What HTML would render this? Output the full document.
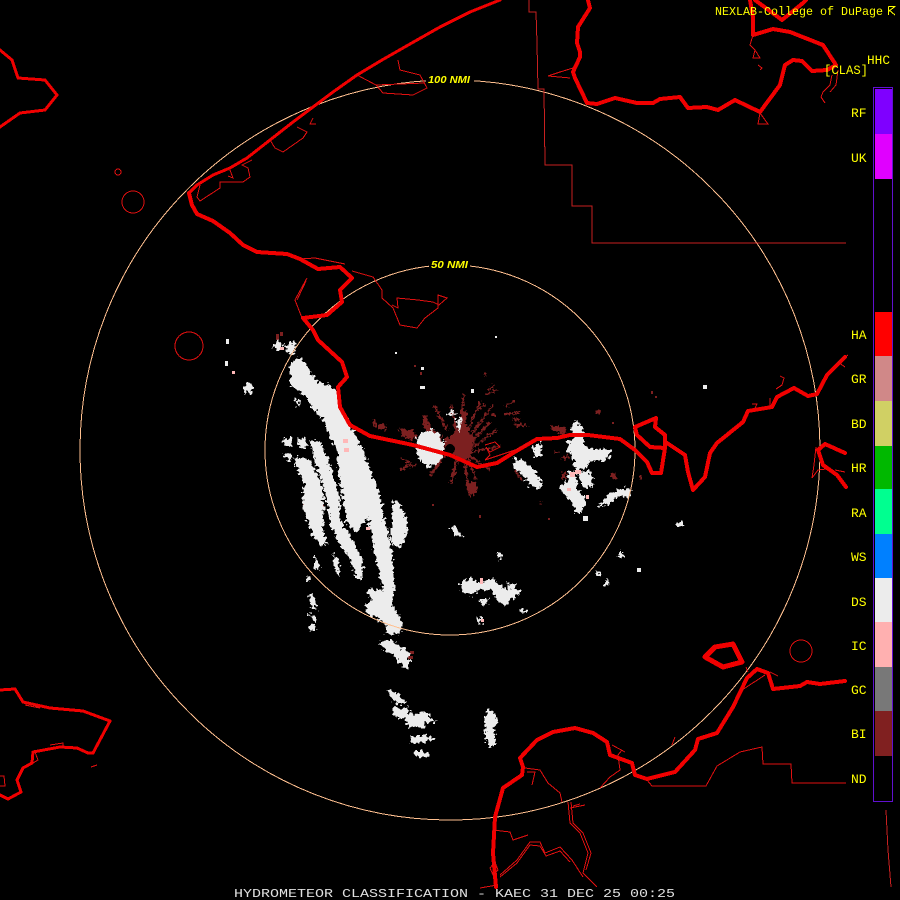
<!DOCTYPE html>
<html><head><meta charset="utf-8"><title>Hydrometeor Classification - KAEC</title>
<style>html,body{margin:0;padding:0;background:#000;width:900px;height:900px;overflow:hidden}svg{display:block}text{font-family:"Liberation Mono",monospace;fill:#ff0}</style></head>
<body>
<svg width="900" height="900" viewBox="0 0 900 900" xmlns="http://www.w3.org/2000/svg" shape-rendering="crispEdges">
<defs>
<filter id="j" filterUnits="userSpaceOnUse" x="0" y="0" width="900" height="900" color-interpolation-filters="sRGB">
<feTurbulence type="fractalNoise" baseFrequency="0.3" numOctaves="2" seed="7" result="n"/>
<feDisplacementMap in="SourceGraphic" in2="n" scale="9" xChannelSelector="R" yChannelSelector="G" result="d"/>
<feComponentTransfer in="d"><feFuncA type="discrete" tableValues="0 1"/></feComponentTransfer>
</filter>
<filter id="k" filterUnits="userSpaceOnUse" x="0" y="0" width="900" height="900" color-interpolation-filters="sRGB">
<feTurbulence type="fractalNoise" baseFrequency="0.45" numOctaves="1" seed="3" result="n"/>
<feDisplacementMap in="SourceGraphic" in2="n" scale="7" xChannelSelector="R" yChannelSelector="G" result="d"/>
<feComponentTransfer in="d"><feFuncA type="discrete" tableValues="0 1"/></feComponentTransfer>
</filter>
</defs>
<rect width="900" height="900" fill="#000"/>
<!-- clutter -->
<g filter="url(#k)">
<g fill="#7c2020">
<polygon points="453,434 460,425 463,412 467,410 466,425 470,434 476,437 473,446 470,460 460,458 451,453 446,452 444,440"/>
<polygon points="422,414 427,417 431,430 440,433 442,447 432,440 424,428"/>
<polygon points="399,428 412,430 418,436 411,440 402,436"/>
<polygon points="465,482 476,482 478,489 474,495 470,493"/>
<polygon points="551,425 565,428 567,437 560,433 551,430"/>
<polygon points="562,473 566,473 565,479 561,478"/>
<rect x="611" y="473" width="5" height="6"/>
<rect x="596" y="410" width="4" height="4"/>
<rect x="562" y="456" width="7" height="3"/>
<rect x="555" y="451" width="5" height="2"/>
<rect x="513" y="418" width="7" height="3"/>
<rect x="516" y="425" width="4" height="2"/>
<rect x="527" y="473" width="4" height="3"/>
<rect x="379" y="424" width="7" height="6"/>
<rect x="373" y="419" width="3" height="8"/>
<rect x="492" y="414" width="4" height="2"/>
<rect x="484" y="372" width="2" height="4"/>
<rect x="639" y="476" width="3" height="3"/>
<rect x="539" y="502" width="3" height="3"/>
</g>
<g stroke="#7c2020" stroke-width="2" fill="none">
<path d="M460,428L464,395M456,430L451,404M468,430L480,402M470,436L494,404M473,440L490,422M474,446L497,430M472,452L500,446M470,456L490,470M464,458L470,498M458,455L452,478M448,450L435,470M444,446L429,452M442,438L424,424M448,432L434,405M440,460L430,476M468,458L476,480M478,410L485,404M488,391L494,385M486,395L498,389M505,414L519,413M505,406L515,401M513,424L528,426M515,470L522,480M456,472L450,484M401,458L409,462M410,467L416,465M400,470L412,463"/>
</g>
</g>
<g fill="#7c2020">
<rect x="420" y="372" width="2" height="3"/>
<rect x="414" y="365" width="2" height="2"/>
<rect x="612" y="422" width="2" height="2"/>
<rect x="432" y="504" width="2" height="2"/>
<rect x="479" y="515" width="2" height="3"/>
<rect x="651" y="391" width="2" height="3"/>
<rect x="655" y="396" width="2" height="2"/>
<rect x="548" y="518" width="2" height="2"/>
<rect x="410" y="651" width="4" height="3"/>
<rect x="408" y="656" width="5" height="3"/>
<rect x="345" y="445" width="5" height="5"/>
<rect x="320" y="505" width="4" height="4"/>
<rect x="303" y="504" width="3" height="5"/>
<rect x="276" y="334" width="3" height="6"/>
<rect x="280" y="332" width="3" height="4"/>
</g>
<!-- echoes DS -->
<g fill="#ececec" filter="url(#j)">
<polygon points="290,365 297,357 305,362 312,375 318,382 330,385 338,392 341,408 350,425 357,437 363,450 370,470 377,485 381,500 383,515 368,517 358,532 347,525 343,500 338,470 337,450 330,437 323,420 310,405 305,395 290,385"/>
<polygon points="310,440 320,440 328,460 335,480 340,500 340,520 350,535 363,560 362,580 356,578 350,558 340,545 330,525 327,500 322,480 314,460"/>
<polygon points="293,458 307,458 320,478 324,500 323,530 327,545 320,545 310,530 302,505 304,485 298,470"/>
<polygon points="368,517 383,515 390,540 393,565 395,585 392,605 403,622 400,635 385,633 387,625 367,612 365,605 372,600 367,592 370,588 378,590 383,590 380,577 373,545"/>
<polygon points="272,345 279,341 284,347 279,352"/>
<polygon points="283,347 290,341 297,345 292,355"/>
<polygon points="392,500 400,505 407,520 407,535 400,548 395,546 390,540 392,520"/>
<polygon points="283,438 292,438 291,447 285,446"/>
<polygon points="283,455 292,453 291,461 287,460"/>
<polygon points="298,438 306,438 306,449 300,448"/>
<polygon points="315,555 320,565 318,572 314,566"/>
<polygon points="333,553 339,562 340,578 335,570"/>
<polygon points="306,576 311,577 310,581 306,580"/>
<polygon points="308,594 313,594 317,610 312,608"/>
<polygon points="309,613 315,617 318,620 314,622"/>
<polygon points="309,626 314,624 316,630 311,632"/>
<polygon points="380,642 392,640 405,650 410,652 408,668 402,666 393,655 384,650"/>
<polygon points="386,689 397,693 404,700 406,703 397,704 392,697"/>
<polygon points="392,708 408,707 410,714 425,712 436,722 425,722 425,727 408,727 405,718 396,718"/>
<polygon points="410,737 424,735 434,738 433,741 420,743 411,743"/>
<polygon points="413,751 428,752 429,757 415,757"/>
<polygon points="488,710 492,710 498,722 494,727 496,743 491,747 487,745 485,727 484,722"/>
<polygon points="460,583 470,578 480,583 492,578 500,585 509,591 507,582 515,585 520,593 510,600 507,605 500,603 490,590 478,590 472,596 462,592"/>
<polygon points="480,599 488,598 487,604 483,607"/>
<polygon points="450,527 455,527 464,536 462,538 454,534"/>
<polygon points="497,553 500,552 503,556 499,560"/>
<polygon points="519,609 524,608 527,612 523,614"/>
<polygon points="478,618 482,618 482,623 478,623"/>
<polygon points="417,437 425,431 433,430 441,436 445,446 443,456 436,465 427,467 421,462 416,452"/>
<polygon points="513,458 525,462 535,470 540,480 543,483 538,490 530,485 522,475 515,470"/>
<polygon points="532,446 542,443 541,455 535,458"/>
<polygon points="572,425 578,420 585,435 583,445 590,448 610,450 610,458 600,462 590,460 587,468 575,470 573,460 568,450 567,443 572,440"/>
<polygon points="560,487 567,481 568,471 575,473 578,490 585,497 585,505 580,515 575,510 570,500 560,490"/>
<polygon points="578,473 590,470 593,487 583,487"/>
<polygon points="597,505 603,502 610,492 625,488 632,490 630,496 618,497 608,505 600,507"/>
<polygon points="447,413 454,410 456,414 449,416"/>
<polygon points="456,420 462,417 461,430 458,433"/>
<rect x="245" y="383" width="7" height="10"/>
<rect x="677" y="522" width="6" height="5"/><rect x="618" y="551" width="5" height="7"/>
<rect x="596" y="572" width="6" height="4"/><rect x="604" y="580" width="5" height="5"/>
<rect x="296" y="399" width="3" height="8"/>
</g>
<g fill="#ececec">
<rect x="421" y="367" width="3" height="3"/><rect x="420" y="386" width="5" height="3"/>
<rect x="471" y="389" width="3" height="4"/><rect x="226" y="339" width="3" height="5"/>
<rect x="225" y="361" width="3" height="5"/>
<rect x="637" y="568" width="4" height="4"/><rect x="703" y="385" width="4" height="4"/>
<rect x="495" y="336" width="2" height="2"/><rect x="395" y="352" width="2" height="2"/>
<rect x="583" y="516" width="5" height="5"/>
</g>
<circle cx="450" cy="449" r="5" fill="#000"/>
<!-- IC pink -->
<g fill="#ffb8b8">
<rect x="343" y="439" width="5" height="4"/><rect x="232" y="371" width="3" height="3"/>
<rect x="344" y="448" width="5" height="4"/><rect x="366" y="527" width="4" height="3"/>
<rect x="570" y="472" width="5" height="5"/><rect x="567" y="488" width="4" height="3"/>
<rect x="575" y="470" width="6" height="4"/><rect x="586" y="495" width="3" height="4"/>
<rect x="480" y="578" width="3" height="6"/><rect x="481" y="619" width="3" height="3"/>
<rect x="280" y="347" width="4" height="3"/>
</g>
<!-- range rings -->
<g fill="none" stroke="#ffc090" stroke-width="1">
<circle cx="450" cy="450" r="370"/>
<circle cx="450" cy="450" r="185"/>
</g>
<rect x="426" y="74" width="48" height="12" fill="#000"/>
<rect x="429" y="259" width="41" height="12" fill="#000"/>
<text x="428" y="83" font-size="10.5" font-weight="bold" font-style="italic" textLength="42" lengthAdjust="spacingAndGlyphs" style="font-family:'Liberation Sans',sans-serif">100 NMI</text>
<text x="431" y="268" font-size="10.5" font-weight="bold" font-style="italic" textLength="37" lengthAdjust="spacingAndGlyphs" style="font-family:'Liberation Sans',sans-serif">50 NMI</text>
<!-- thick coasts -->
<g fill="none" stroke="#f00000" stroke-width="4" stroke-linejoin="round" stroke-linecap="round">
<path stroke-width="3" d="M500,0L470,12L440,27L410,44L382,60L357,75L333,92L313,107L293,122L270,140L247,158L230,168L213,175L197,185L189,193"/>
<path d="M189,193L192,205L197,214L213,221L230,233L243,245L257,252L287,254L300,259L318,269L340,267L352,278L340,290L342,302L327,315L303,318L313,330L318,340L342,362L347,377L338,387L340,407L350,425L370,436L413,445L450,455L477,467L497,463L513,453L537,439L557,438L570,435L588,435L620,439L635,450L647,462L652,473L661,473L665,448L665,435L655,427L656,418L635,427L637,435L650,447L665,448M667,443L685,455L688,472L693,490L705,477L710,453L717,443L743,422L748,411L772,407L777,397L794,388L808,396L817,394L827,375L845,357"/>
<path d="M845,453L825,444L818,450L823,465L837,475L846,487"/>
<path d="M588,0L590,8L578,27L577,43L580,52L580,57L573,72L575,78L587,103L597,104L615,98L637,103L653,103L660,99L680,97L688,108L707,107L718,110L735,100L760,112L780,85L785,65L793,60L802,61L812,71L827,70L836,65L823,45L790,32L773,29L753,35L753,17L750,0M755,0L782,20L803,3L806,0"/>
<path d="M0,50L12,60L18,78L45,80L57,95L45,110L20,113L0,127" stroke-width="3"/>
<path stroke-width="3" d="M0,690L15,689L23,702L50,708L83,711L110,721L93,753L88,753L77,748L60,747L33,752L32,763L23,768L17,780L21,792L8,799L0,795"/>
<path d="M496,887L493,853L495,817L503,788L522,775L523,767L520,758L537,740L553,732L575,728L593,733L607,742L610,755L632,763L635,775L647,779L675,772L695,750L698,739L717,733L733,707L747,678L757,669L768,673L773,689L800,686L807,682L820,684L845,681"/>
<path d="M705,657L715,647L733,644L742,662L723,667Z" stroke-width="5"/>
</g>
<!-- thin lines -->
<g fill="none" stroke="#e01010" stroke-width="1">
<path d="M529,0V12H536L537,43L538,89H544L545,165H572V206H592V243H846" stroke="#c82020"/>
<path d="M647,780L652,786H706L717,766L740,752L762,747L763,764H791L792,783H846"/>
<path d="M886,810L888,850L891,887" stroke="#c82020"/>
<circle cx="133" cy="202" r="11"/><circle cx="189" cy="346" r="14"/><circle cx="801" cy="651" r="11"/><circle cx="118" cy="172" r="3"/>
<path d="M376,85L383,93L413,95L427,88L420,75L400,70L398,60M357,75L376,85L425,83"/>
<path d="M270,140L275,148L283,152L303,138L307,132L297,127M313,118L310,124L316,124"/>
<path d="M200,185L197,197L200,201L220,188L220,182L243,182L250,177L248,168L242,165L252,160M230,170L233,178L228,176"/>
<path d="M352,271L373,277L382,290L382,298L393,308L400,325L417,328L425,318L438,308L438,295L447,298L439,305L433,302L418,300L397,298L398,308L392,305"/>
<path d="M300,259L315,258L335,262L345,264"/>
<path d="M307,278L295,300L302,318M306,281L297,300"/>
<path d="M525,768L540,770L548,783L560,793L562,802M527,772L535,772L532,785"/>
<path d="M568,802L570,823L580,833L588,853L583,873L597,887M571,802L573,823L583,833L591,853L586,870M570,808L585,805M573,806L580,804"/>
<path d="M493,830L510,832L513,840L528,835"/>
<path d="M500,875L517,860L530,842L540,842L545,853L560,847L572,860L583,877M500,877L517,863L530,845L540,846L546,856L560,851L570,862"/>
<path d="M600,788L610,777L620,770L618,755L622,750M612,745L625,752"/>
<path d="M490,868L495,862L498,870L493,875ZM480,888L497,885"/>
<path d="M548,76L560,72L573,68M548,76L570,78"/>
<path d="M753,35L750,45L755,50L753,58H760L755,50M758,65L762,68L760,70"/>
<path d="M832,75L830,85L823,92L821,97L825,103M838,70L836,85L830,92"/>
<path d="M760,113L758,124H768L760,113"/>
<path d="M848,355L838,362L845,367"/>
<path d="M816,447L814,465L812,478L818,470L826,469M835,470L845,472"/>
<path d="M776,389L782,385L784,378L780,376M770,407L770,398M755,408L757,404L752,404"/>
<path d="M485,460L490,455L486,447M486,447L490,452L500,447L495,442L485,445M485,460L500,455L515,450L530,443"/>
<path d="M675,737L672,745"/>
<path d="M746,667L748,672M742,690L765,675M770,672L778,676"/>
<path d="M25,705L40,708L28,702M50,745L63,743V748M35,752L38,760L33,763M0,776H4L5,786H0M91,767L97,765"/>
</g>
<!-- title -->
<text x="234" y="897" font-size="12" textLength="441" lengthAdjust="spacingAndGlyphs" style="fill:#e0e0e0">HYDROMETEOR CLASSIFICATION - KAEC 31 DEC 25 00:25</text>
<text x="715" y="15" font-size="12" textLength="168" lengthAdjust="spacingAndGlyphs">NEXLAB-College of DuPage</text>
<path d="M888.5,6.5H895.5M888.5,6.5V15M889,11L895,6.5M889,10L895,15" fill="none" stroke="#ff0"/>
<text x="867" y="64" font-size="13" textLength="23" lengthAdjust="spacingAndGlyphs">HHC</text>
<text x="824" y="74" font-size="13" textLength="44" lengthAdjust="spacingAndGlyphs">[CLAS]</text>
<!-- legend -->
<rect x="873.5" y="87.5" width="19" height="714" fill="#000" stroke="#6010d0"/>
<rect x="875" y="89" width="17" height="45" fill="#7f00ff"/>
<rect x="875" y="134" width="17" height="45" fill="#e000ff"/>
<rect x="875" y="312" width="17" height="44" fill="#ff0000"/>
<rect x="875" y="356" width="17" height="45" fill="#d08888"/>
<rect x="875" y="401" width="17" height="45" fill="#d0d064"/>
<rect x="875" y="446" width="17" height="43" fill="#00b800"/>
<rect x="875" y="489" width="17" height="45" fill="#00ff90"/>
<rect x="875" y="534" width="17" height="44" fill="#0080ff"/>
<rect x="875" y="578" width="17" height="44" fill="#ececec"/>
<rect x="875" y="622" width="17" height="45" fill="#ffb0b0"/>
<rect x="875" y="667" width="17" height="44" fill="#787878"/>
<rect x="875" y="711" width="17" height="45" fill="#802020"/>
<g font-size="13">
<text x="851" y="117">RF</text><text x="851" y="162">UK</text>
<text x="851" y="339">HA</text><text x="851" y="383">GR</text>
<text x="851" y="428">BD</text><text x="851" y="472">HR</text>
<text x="851" y="517">RA</text><text x="851" y="561">WS</text>
<text x="851" y="606">DS</text><text x="851" y="650">IC</text>
<text x="851" y="694">GC</text><text x="851" y="738">BI</text>
<text x="851" y="783">ND</text>
</g>
</svg>
</body></html>
